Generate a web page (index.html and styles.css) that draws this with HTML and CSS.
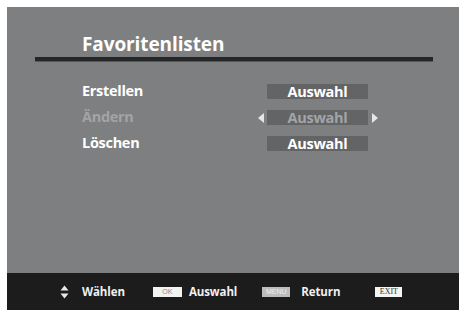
FILE: index.html
```html
<!DOCTYPE html>
<html lang="de">
<head>
<meta charset="utf-8">
<title>Favoritenlisten</title>
<link rel="stylesheet" href="styles.css">
</head>
<body>
<div class="screen">
  <div class="content">
    <h1 class="title">Favoritenlisten</h1>
    <div class="rule"></div>
    <div class="rows">
      <div class="row">
        <span class="label">Erstellen</span>
        <div class="value">
          <span class="arrow left hidden"></span>
          <span class="box">Auswahl</span>
          <span class="arrow right hidden"></span>
        </div>
      </div>
      <div class="row disabled">
        <span class="label">Ändern</span>
        <div class="value">
          <span class="arrow left"></span>
          <span class="box">Auswahl</span>
          <span class="arrow right"></span>
        </div>
      </div>
      <div class="row">
        <span class="label">Löschen</span>
        <div class="value">
          <span class="arrow left hidden"></span>
          <span class="box">Auswahl</span>
          <span class="arrow right hidden"></span>
        </div>
      </div>
    </div>
  </div>
  <div class="footer">
    <svg class="updown" width="9" height="14" viewBox="0 0 9 14">
      <path d="M4.5 0.5 L8.5 5.5 L0.5 5.5 Z" fill="#e8e8e8"/>
      <path d="M0.5 8.5 L8.5 8.5 L4.5 13.5 Z" fill="#e8e8e8"/>
    </svg>
    <span class="ftext t1">Wählen</span>
    <span class="key ok">OK</span>
    <span class="ftext t2">Auswahl</span>
    <span class="key menu">MENU</span>
    <span class="ftext t3">Return</span>
    <span class="key exit">EXIT</span>
  </div>
</div>
</body>
</html>
```
FILE: styles.css
```css
html, body {
  margin: 0;
  padding: 0;
  background: #ffffff;
}
body {
  width: 465px;
  height: 312px;
  overflow: hidden;
  font-family: "Open Sans", "DejaVu Sans", sans-serif;
}
.screen {
  margin: 7px 0 0 7px;
  width: 452px;
  height: 303px;
  background: #7e7f81;
  display: flex;
  flex-direction: column;
}
.content {
  flex: 1;
  padding-top: 24px;
}
.title {
  margin: 0 0 0 75px;
  font-size: 19px;
  line-height: 26px;
  font-weight: 700;
  color: #ffffff;
  letter-spacing: -0.1px;
}
.rule {
  margin-left: 28px;
  width: 398px;
  height: 4px;
  background: #252627;
  border-bottom: 1px solid #55575a;
}
.rows {
  margin-top: 16px;
  padding-left: 75px;
}
.row {
  display: flex;
  height: 26px;
}
.label {
  width: 176px;
  font-size: 14.5px;
  line-height: 26px;
  font-weight: 700;
  color: #ffffff;
  letter-spacing: -0.3px;
}
.value {
  display: flex;
  align-items: center;
  height: 15px;
  margin-top: 6px;
}
.box {
  width: 101px;
  height: 15px;
  background: #636466;
  text-align: center;
  font-size: 14.5px;
  line-height: 15px;
  font-weight: 700;
  color: #ffffff;
  letter-spacing: -0.3px;
}
.arrow {
  width: 0;
  height: 0;
  border-top: 5px solid transparent;
  border-bottom: 5px solid transparent;
}
.arrow.left {
  border-right: 6px solid #e6e6e6;
  margin-right: 3px;
}
.arrow.right {
  border-left: 6px solid #e6e6e6;
  margin-left: 4px;
}
.arrow.hidden {
  visibility: hidden;
}
.disabled .label,
.disabled .box {
  color: #a3a4a6;
}
.footer {
  height: 37px;
  background: #1c1c1d;
  display: flex;
  align-items: center;
  padding-left: 53px;
}
.updown {
  display: block;
  margin-right: 13px;
}
.ftext {
  font-size: 11.5px;
  font-weight: 700;
  color: #f0f0f0;
  letter-spacing: -0.1px;
}
.key {
  display: flex;
  align-items: center;
  justify-content: center;
  height: 10px;
  font-family: "Liberation Sans", sans-serif;
  font-size: 7px;
  line-height: 10px;
}
.ok {
  width: 29px;
  margin-left: 28px;
  margin-right: 7px;
  background: #f2f2f2;
  color: #8a8a8a;
}
.menu {
  width: 28px;
  margin-left: 25px;
  margin-right: 11px;
  background: #bdbdbd;
  color: #eeeeee;
}
.exit {
  width: 27px;
  margin-left: 35px;
  background: #f4f4f4;
  color: #333333;
  font-family: "Liberation Serif", serif;
  font-size: 8px;
}
```
